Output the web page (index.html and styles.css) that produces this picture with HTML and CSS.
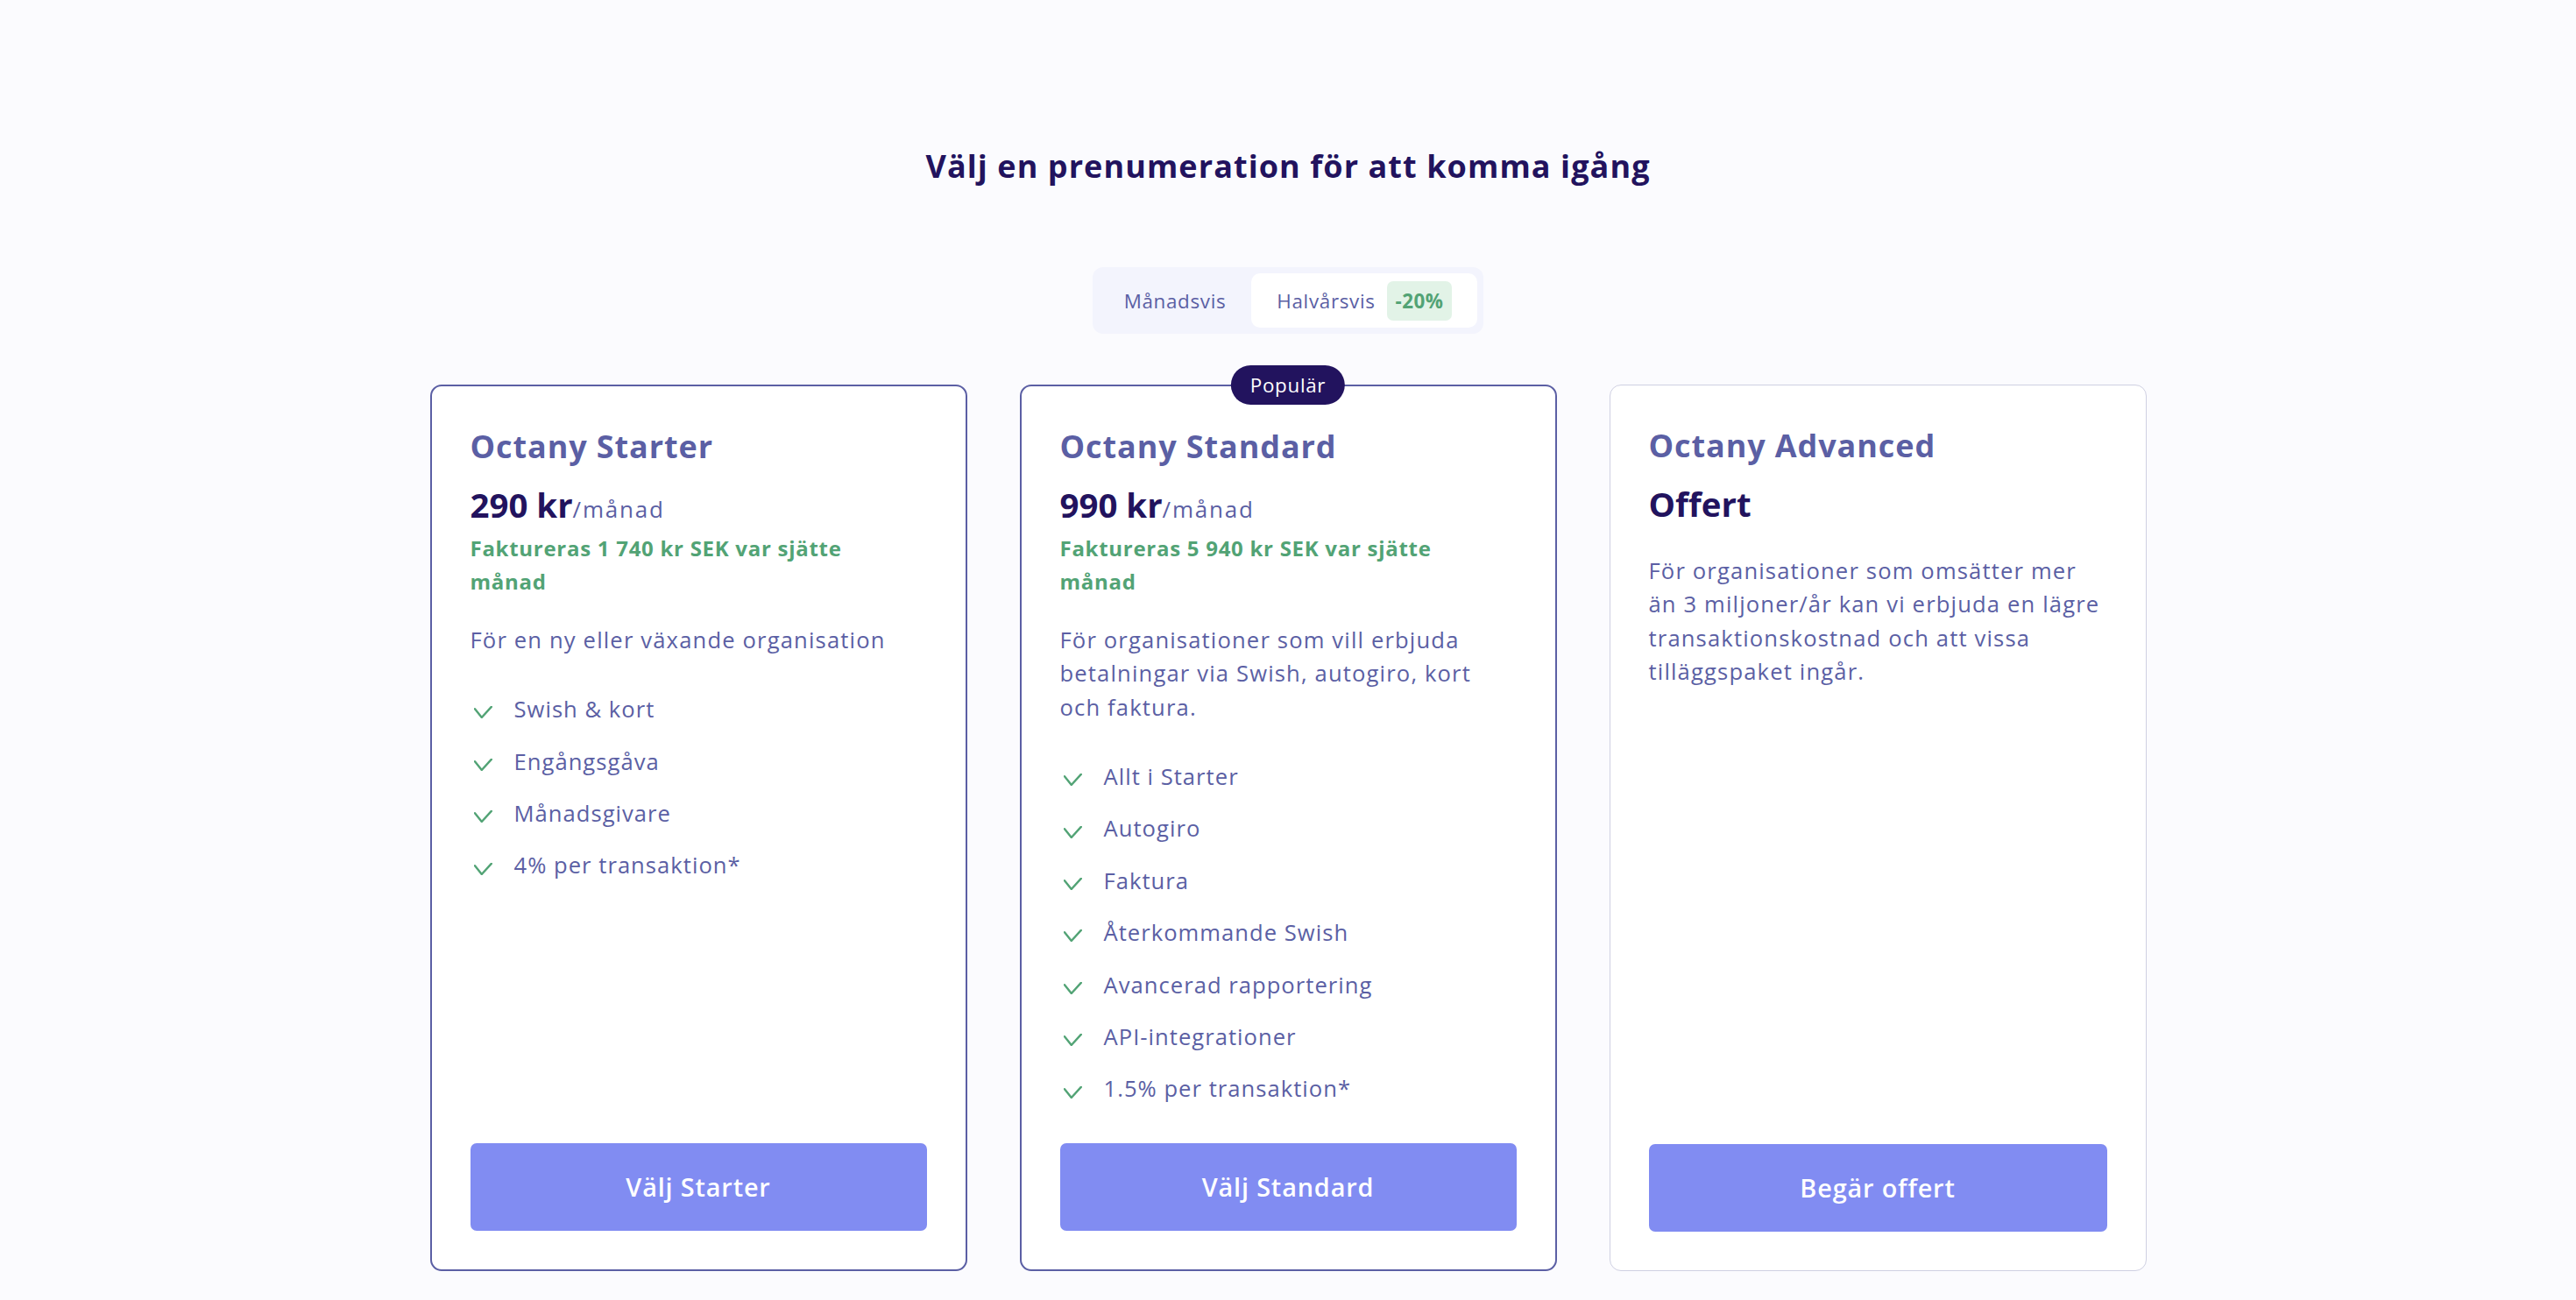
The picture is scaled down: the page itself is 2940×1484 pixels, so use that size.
FILE: index.html
```html
<!DOCTYPE html>
<html lang="sv">
<head>
<meta charset="utf-8">
<title>Välj en prenumeration</title>
<link rel="stylesheet" href="styles.css">
</head>
<body>
<main class="page">
  <h1 class="page-title">Välj en prenumeration för att komma igång</h1>

  <div class="toggle">
    <button class="toggle-option">Månadsvis</button>
    <button class="toggle-option is-active">Halvårsvis <span class="discount">-20%</span></button>
  </div>

  <div class="plans">
    <section class="plan plan--highlight">
      <h2 class="plan-name">Octany Starter</h2>
      <p class="plan-price"><strong>290 kr</strong><span class="per">/månad</span></p>
      <p class="plan-billed">Faktureras 1 740 kr SEK var sjätte<br>månad</p>
      <p class="plan-desc">För en ny eller växande organisation</p>
      <ul class="features">
        <li><svg class="check" viewBox="0 0 21 14"><path d="M1 3.2 L8.8 13 L19.8 0.9"/></svg>Swish &amp; kort</li>
        <li><svg class="check" viewBox="0 0 21 14"><path d="M1 3.2 L8.8 13 L19.8 0.9"/></svg>Engångsgåva</li>
        <li><svg class="check" viewBox="0 0 21 14"><path d="M1 3.2 L8.8 13 L19.8 0.9"/></svg>Månadsgivare</li>
        <li><svg class="check" viewBox="0 0 21 14"><path d="M1 3.2 L8.8 13 L19.8 0.9"/></svg>4% per transaktion*</li>
      </ul>
      <button class="plan-button">Välj Starter</button>
    </section>

    <section class="plan plan--highlight">
      <span class="popular">Populär</span>
      <h2 class="plan-name">Octany Standard</h2>
      <p class="plan-price"><strong>990 kr</strong><span class="per">/månad</span></p>
      <p class="plan-billed">Faktureras 5 940 kr SEK var sjätte<br>månad</p>
      <p class="plan-desc">För organisationer som vill erbjuda<br>betalningar via Swish, autogiro, kort<br>och faktura.</p>
      <ul class="features">
        <li><svg class="check" viewBox="0 0 21 14"><path d="M1 3.2 L8.8 13 L19.8 0.9"/></svg>Allt i Starter</li>
        <li><svg class="check" viewBox="0 0 21 14"><path d="M1 3.2 L8.8 13 L19.8 0.9"/></svg>Autogiro</li>
        <li><svg class="check" viewBox="0 0 21 14"><path d="M1 3.2 L8.8 13 L19.8 0.9"/></svg>Faktura</li>
        <li><svg class="check" viewBox="0 0 21 14"><path d="M1 3.2 L8.8 13 L19.8 0.9"/></svg>Återkommande Swish</li>
        <li><svg class="check" viewBox="0 0 21 14"><path d="M1 3.2 L8.8 13 L19.8 0.9"/></svg>Avancerad rapportering</li>
        <li><svg class="check" viewBox="0 0 21 14"><path d="M1 3.2 L8.8 13 L19.8 0.9"/></svg>API-integrationer</li>
        <li><svg class="check" viewBox="0 0 21 14"><path d="M1 3.2 L8.8 13 L19.8 0.9"/></svg>1.5% per transaktion*</li>
      </ul>
      <button class="plan-button">Välj Standard</button>
    </section>

    <section class="plan plan--custom">
      <h2 class="plan-name">Octany Advanced</h2>
      <p class="plan-price"><strong>Offert</strong></p>
      <p class="plan-desc">För organisationer som omsätter mer<br>än 3 miljoner/år kan vi erbjuda en lägre<br>transaktionskostnad och att vissa<br>tilläggspaket ingår.</p>
      <button class="plan-button">Begär offert</button>
    </section>
  </div>
</main>
</body>
</html>
```

FILE: styles.css
```css
* {
  box-sizing: border-box;
}

html, body {
  margin: 0;
  padding: 0;
}

body {
  background: #fbfbfe;
  font-family: "Open Sans", "Liberation Sans", sans-serif;
  color: #5b5fa4;
  min-height: 100vh;
}

.page {
  display: flex;
  flex-direction: column;
  align-items: center;
  padding-top: 163px;
}

.page-title {
  margin: 0;
  font-size: 36px;
  line-height: 54px;
  font-weight: 700;
  letter-spacing: 0.03em;
  color: #22135e;
}

.toggle {
  margin-top: 88px;
  display: flex;
  padding: 7px;
  background: #f3f4fd;
  border-radius: 12px;
}

.toggle-option {
  display: flex;
  align-items: center;
  gap: 13px;
  height: 62px;
  padding: 0 29px;
  border: 0;
  background: transparent;
  border-radius: 10px;
  font-family: inherit;
  font-size: 22.4px;
  font-weight: 500;
  letter-spacing: 0.03em;
  color: #5b5fa4;
}

.toggle-option.is-active {
  background: #ffffff;
}

.discount {
  display: inline-flex;
  align-items: center;
  height: 45px;
  padding: 0 10px;
  border-radius: 7px;
  background: #e2f3e7;
  color: #52a375;
  font-weight: 700;
  letter-spacing: 0.02em;
}

.plans {
  margin-top: 58px;
  display: grid;
  grid-template-columns: repeat(3, 613px);
  gap: 60px;
}

.plan {
  position: relative;
  display: flex;
  flex-direction: column;
  padding: 44px;
  background: #ffffff;
  border: 1px solid #cfd0e2;
  border-radius: 13px;
}

.plan--highlight {
  border: 2px solid #5b5fa4;
}

.popular {
  position: absolute;
  top: -24px;
  left: 50%;
  transform: translateX(-50%);
  height: 45px;
  padding: 0 22px;
  display: flex;
  align-items: center;
  border-radius: 23px;
  background: #22135e;
  color: #ffffff;
  font-size: 22.4px;
  font-weight: 500;
  letter-spacing: 0.03em;
}

.plan-name {
  margin: 0;
  font-size: 36px;
  line-height: 50px;
  font-weight: 700;
  letter-spacing: 0.025em;
  color: #5b5fa4;
}

.plan-price {
  margin: 16px 0 0;
  line-height: 51px;
  font-size: 38.4px;
}

.plan-price strong {
  font-weight: 700;
  color: #22135e;
}

.plan-price .per {
  font-size: 26px;
  font-weight: 400;
  letter-spacing: 0.07em;
  color: #5b5fa4;
}

.plan-billed {
  margin: 0;
  font-size: 24px;
  line-height: 38.4px;
  font-weight: 700;
  letter-spacing: 0.03em;
  color: #52a375;
}

.plan-desc {
  margin: 28px 0 0;
  font-size: 25.6px;
  line-height: 38.4px;
  font-weight: 400;
  letter-spacing: 0.045em;
  color: #5b5fa4;
}

.plan--custom .plan-desc {
  margin-top: 32px;
}

.features {
  list-style: none;
  margin: 41px 0 42px;
  padding: 0;
  display: flex;
  flex-direction: column;
  gap: 21px;
}

.features li {
  display: flex;
  align-items: center;
  font-size: 25.6px;
  line-height: 38.4px;
  letter-spacing: 0.04em;
  color: #5b5fa4;
}

.check {
  width: 21px;
  height: 14px;
  margin: 6px 25px 0 4px;
  flex: none;
  fill: none;
  stroke: #52a375;
  stroke-width: 2.4;
  stroke-linecap: round;
  stroke-linejoin: round;
}

.plan-button {
  margin-top: auto;
  height: 100px;
  width: 100%;
  border: 0;
  border-radius: 7px;
  background: #818cf2;
  color: #ffffff;
  font-family: inherit;
  font-size: 28.8px;
  font-weight: 600;
  letter-spacing: 0.03em;
}
```
